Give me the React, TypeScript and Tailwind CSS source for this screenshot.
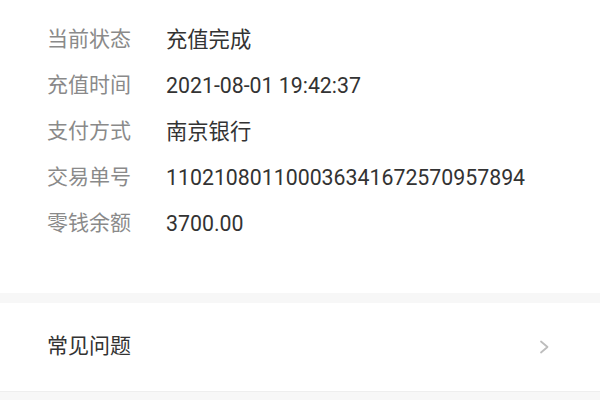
const rows: [string, string][] = [
  ['当前状态', '充值完成'],
  ['充值时间', '2021-08-01 19:42:37'],
  ['支付方式', '南京银行'],
  ['交易单号', '110210801100036341672570957894'],
  ['零钱余额', '3700.00'],
]

export default function App() {
  return (
    <div
      className="w-[600px] h-[400px] overflow-hidden bg-[#f7f7f7] flex flex-col"
      style={{ fontFamily: "Roboto, 'Noto Sans CJK SC', sans-serif" }}
    >
      {/* details */}
      <div className="bg-white pt-[17px] h-[293px] shrink-0">
        {rows.map(([label, value]) => (
          <div key={label} className="h-[46px] flex items-center px-[47px]">
            <span className="w-[119px] shrink-0 text-[21px] text-[#8a8a8a]">{label}</span>
            <span className="text-[21.3px] text-[#333333]">{value}</span>
          </div>
        ))}
      </div>

      <div className="h-[10px] shrink-0 bg-[#f7f7f7]" />

      {/* faq entry */}
      <div className="bg-white h-[89px] shrink-0 flex items-center justify-between pl-[47px] pr-[50px] border-b border-[#eeeeee]">
        <span className="text-[21px] text-[#333333]">常见问题</span>
        <svg width="11" height="14" viewBox="0 0 11 14" fill="none">
          <path d="M2 1.5L8.5 7L2 12.5" stroke="#bdbdbd" strokeWidth="1.8" strokeLinecap="round" strokeLinejoin="round" />
        </svg>
      </div>
    </div>
  )
}
